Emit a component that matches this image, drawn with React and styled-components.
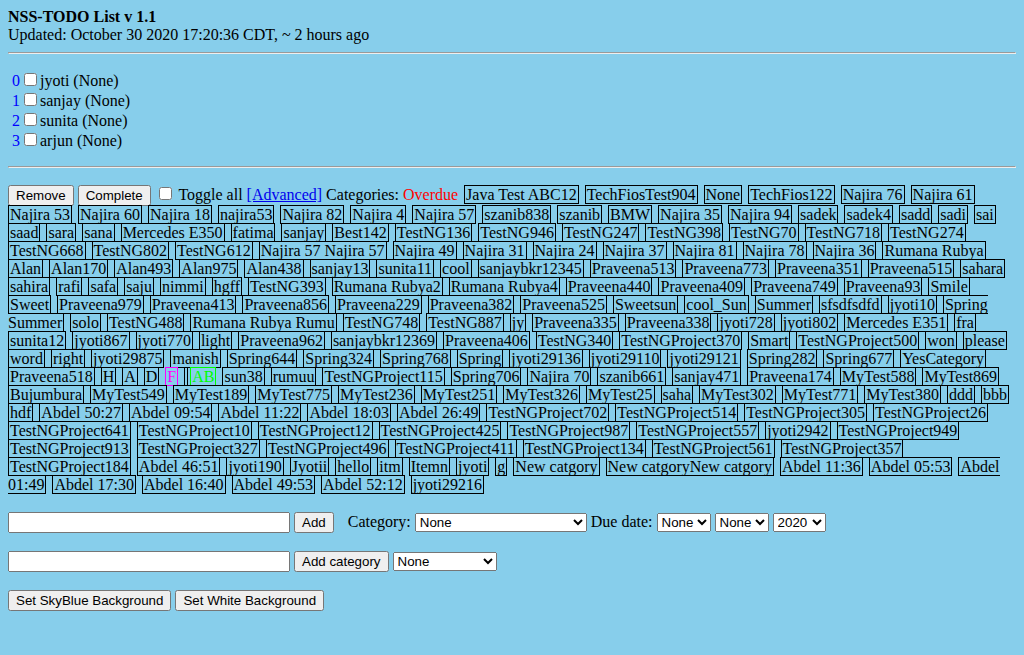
import React, { useState } from 'react';
import styled, { createGlobalStyle } from 'styled-components';

const GlobalStyle = createGlobalStyle`
body {
    margin: 8px;
    background: #87ceeb;
    font-family: "Liberation Serif", "Times New Roman", serif;
    font-size: 16px;
    color: #000;
}
`;

const Header = styled.div`
line-height: normal;
`;

const Title = styled.b`
display: block;
font-weight: bold;
`;

const Rule = styled.hr`
margin: 8px 0;
border-style: inset;
border-width: 1px;
color: gray;
`;

const TodoList = styled.div`
margin: 16px 0;
`;

const TodoRow = styled.div``;

const Index = styled.span`
padding-left: 4px;
color: #0000ff;
`;

const Check = styled.input`
margin: 3px 3px 3px 4px;
vertical-align: baseline;
`;

const Block = styled.div`
margin: 16px 0;
`;

const FormRow = styled.div`
margin: 16px 0;
padding-top: 2px;
`;

const Button = styled.button`
font-family: "Liberation Sans", Arial, sans-serif;
font-size: 13.333px;
`;

const Link = styled.a`
color: #0000ee;
text-decoration: underline;
cursor: pointer;
`;

const Overdue = styled.span`
color: #ff0000;
margin-right: 2px;
`;

const Tag = styled.span`
border: 1px solid;
padding: 0 1px;
margin-right: 2px;
color: ${p => p.$color || '#000'};
`;

const TextInput = styled.input`
width: 282px;
box-sizing: border-box;
font-family: "Liberation Sans", Arial, sans-serif;
font-size: 13.333px;
`;

const Label = styled.span`
margin-left: ${p => p.$gap || 0}px;
`;

const Select = styled.select`
width: ${p => p.$w}px;
box-sizing: border-box;
font-family: "Liberation Sans", Arial, sans-serif;
font-size: 13.333px;
`;

const todos = ['jyoti', 'sanjay', 'sunita', 'arjun'];

const categories = [
    'Java Test ABC12', 'TechFiosTest904', 'None', 'TechFios122', 'Najira 76', 'Najira 61',
    'Najira 53', 'Najira 60', 'Najira 18', 'najira53', 'Najira 82', 'Najira 4', 'Najira 57', 'szanib838', 'szanib', 'BMW', 'Najira 35', 'Najira 94', 'sadek', 'sadek4', 'sadd', 'sadi', 'sai',
    'saad', 'sara', 'sana', 'Mercedes E350', 'fatima', 'sanjay', 'Best142', 'TestNG136', 'TestNG946', 'TestNG247', 'TestNG398', 'TestNG70', 'TestNG718', 'TestNG274',
    'TestNG668', 'TestNG802', 'TestNG612', 'Najira 57 Najira 57', 'Najira 49', 'Najira 31', 'Najira 24', 'Najira 37', 'Najira 81', 'Najira 78', 'Najira 36', 'Rumana Rubya',
    'Alan', 'Alan170', 'Alan493', 'Alan975', 'Alan438', 'sanjay13', 'sunita11', 'cool', 'sanjaybkr12345', 'Praveena513', 'Praveena773', 'Praveena351', 'Praveena515', 'sahara',
    'sahira', 'rafi', 'safa', 'saju', 'nimmi', 'hgff', 'TestNG393', 'Rumana Rubya2', 'Rumana Rubya4', 'Praveena440', 'Praveena409', 'Praveena749', 'Praveena93', 'Smile',
    'Sweet', 'Praveena979', 'Praveena413', 'Praveena856', 'Praveena229', 'Praveena382', 'Praveena525', 'Sweetsun', 'cool_Sun', 'Summer', 'sfsdfsdfd', 'jyoti10', 'Spring Summer',
    'solo', 'TestNG488', 'Rumana Rubya Rumu', 'TestNG748', 'TestNG887', 'jy', 'Praveena335', 'Praveena338', 'jyoti728', 'jyoti802', 'Mercedes E351', 'fra',
    'sunita12', 'jyoti867', 'jyoti770', 'light', 'Praveena962', 'sanjaybkr12369', 'Praveena406', 'TestNG340', 'TestNGProject370', 'Smart', 'TestNGProject500', 'won', 'please',
    'word', 'right', 'jyoti29875', 'manish', 'Spring644', 'Spring324', 'Spring768', 'Spring', 'jyoti29136', 'jyoti29110', 'jyoti29121', 'Spring282', 'Spring677', 'YesCategory',
    'Praveena518', 'H', 'A', 'D', { name: 'F', color: '#ff00ff' }, '', { name: 'AB', color: '#00ff00' }, 'sun38', 'rumuu', 'TestNGProject115', 'Spring706', 'Najira 70', 'szanib661', 'sanjay471', 'Praveena174', 'MyTest588', 'MyTest869',
    'Bujumbura', 'MyTest549', 'MyTest189', 'MyTest775', 'MyTest236', 'MyTest251', 'MyTest326', 'MyTest25', 'saha', 'MyTest302', 'MyTest771', 'MyTest380', 'ddd', 'bbb',
    'hdf', 'Abdel 50:27', 'Abdel 09:54', 'Abdel 11:22', 'Abdel 18:03', 'Abdel 26:49', 'TestNGProject702', 'TestNGProject514', 'TestNGProject305', 'TestNGProject26',
    'TestNGProject641', 'TestNGProject10', 'TestNGProject12', 'TestNGProject425', 'TestNGProject987', 'TestNGProject557', 'jyoti2942', 'TestNGProject949',
    'TestNGProject913', 'TestNGProject327', 'TestNGProject496', 'TestNGProject411', 'TestNGProject134', 'TestNGProject561', 'TestNGProject357',
    'TestNGProject184', 'Abdel 46:51', 'jyoti190', 'Jyotii', 'hello', 'itm', 'Itemn', 'jyoti', 'g', 'New catgory', 'New catgoryNew catgory', 'Abdel 11:36', 'Abdel 05:53', 'Abdel 01:49',
    'Abdel 17:30', 'Abdel 16:40', 'Abdel 49:53', 'Abdel 52:12', 'jyoti29216'
];

const App = () => {

    const [checked, setChecked] = useState([false, false, false, false]);
    const [bg, setBg] = useState('#87ceeb');

    const toggle = (i) => {
        const next = [...checked];
        next[i] = !next[i];
        setChecked(next);
    };

    const toggleAll = (e) => {
        setChecked(checked.map(() => e.target.checked));
    };

    return (
        <>
            <GlobalStyle />
            <style>{`body{background:${bg};}`}</style>
            <Header>
                <Title>NSS-TODO List v 1.1</Title>
                Updated: October 30 2020 17:20:36 CDT, ~ 2 hours ago
            </Header>
            <Rule />
            <TodoList>
                {todos.map((name, i) => (
                    <TodoRow key={name}>
                        <Index>{i}</Index>
                        <Check type="checkbox" checked={checked[i]} onChange={() => toggle(i)} />
                        {name} (None)
                    </TodoRow>
                ))}
            </TodoList>
            <Rule />
            <Block>
                <Button>Remove</Button> <Button>Complete</Button>{' '}
                <Check type="checkbox" onChange={toggleAll} /> Toggle all <Link>[Advanced]</Link> Categories:{' '}
                <Overdue>Overdue</Overdue>
                {categories.map((c, i) => {
                    const item = typeof c === 'string' ? { name: c } : c;
                    return (
                        <React.Fragment key={i}>
                            {' '}<Tag $color={item.color}>{item.name}</Tag>
                        </React.Fragment>
                    );
                })}
            </Block>
            <FormRow>
                <TextInput type="text" /> <Button>Add</Button>{' '}
                <Label $gap={10}>Category:</Label>{' '}
                <Select $w={172}><option>None</option></Select> Due date:{' '}
                <Select $w={54}><option>None</option></Select>{' '}
                <Select $w={54}><option>None</option></Select>{' '}
                <Select $w={53}><option>2020</option></Select>
            </FormRow>
            <FormRow>
                <TextInput type="text" /> <Button>Add category</Button>{' '}
                <Select $w={104}><option>None</option></Select>
            </FormRow>
            <FormRow>
                <Button onClick={() => setBg('#87ceeb')}>Set SkyBlue Background</Button>{' '}
                <Button onClick={() => setBg('#ffffff')}>Set White Background</Button>
            </FormRow>
        </>
    );
};

export default App;
